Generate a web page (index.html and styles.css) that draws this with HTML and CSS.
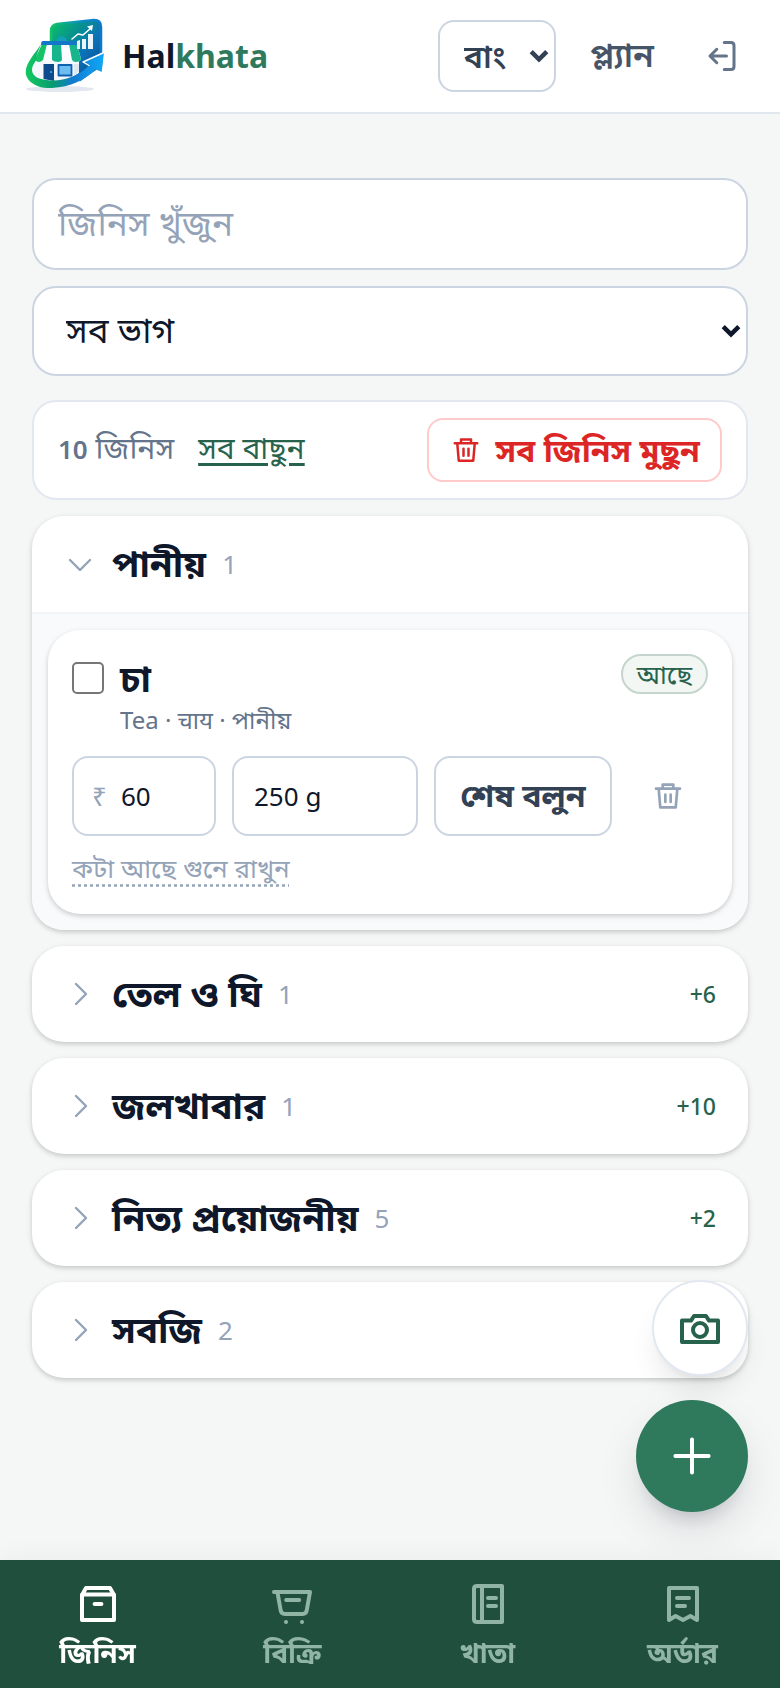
FILE: index.html
```html
<!DOCTYPE html>
<html lang="bn">
<head>
    <meta charset="UTF-8">
    <meta name="viewport" content="width=device-width, initial-scale=1.0">
    <title>Halkhata</title>
    <link rel="stylesheet" href="styles.css">
</head>
<body>
  <!-- icons used more than once -->
  <svg class="sprite" aria-hidden="true">
    <symbol id="trash" viewBox="0 0 24 24">
      <path d="M3 6.500h18M8 6V3.500h8V6M5 6.500l1.200 14h11.600L19 6.500M10 11v5.500M14 11v5.500"/>
    </symbol>
    <symbol id="arrow" viewBox="0 0 18 12">
      <path d="M2 2l7 7 7-7"/>
    </symbol>
    <symbol id="right" viewBox="0 0 16 16">
      <path d="M6 3l5 5-5 5"/>
    </symbol>
  </svg>

  <header class="topbar">
    <a class="brand" href="#">
      <svg class="logo" viewBox="24 16 82 80" aria-hidden="true">
        <defs>
          <linearGradient id="panel" x1="0" y1="0" x2="1" y2="1">
            <stop offset="0" stop-color="#0cc465"/>
            <stop offset=".35" stop-color="#07908f"/>
            <stop offset=".6" stop-color="#0b72b8"/>
            <stop offset="1" stop-color="#0b3f84"/>
          </linearGradient>
          <linearGradient id="edge" x1="0" y1="0" x2="1" y2="0">
            <stop offset="0" stop-color="#10c463"/>
            <stop offset=".6" stop-color="#0d8cc8"/>
            <stop offset="1" stop-color="#1078cc"/>
          </linearGradient>
          <linearGradient id="swoosh" x1="0" y1="0" x2="1" y2="0">
            <stop offset="0" stop-color="#12c95e"/>
            <stop offset=".35" stop-color="#089a72"/>
            <stop offset=".6" stop-color="#127bd0"/>
            <stop offset="1" stop-color="#0fa8f6"/>
          </linearGradient>
        </defs>
        <ellipse cx="60" cy="89" rx="34" ry="3" fill="#e3e7ef"/>
        <path d="M51 60V31q0-6 6-7l37-4q7 0 7 7v38L80 80 62 74z" fill="url(#panel)" stroke="url(#edge)" stroke-width="2.500"/>
        <path d="M36 57h43v16q-12 9-25 9-16-1-22-9 0-9 4-16z" fill="#f4f7fb"/>
        <path d="M56 41q2-5 6-5 4 1 5 5z" fill="#10a0b8"/>
        <path d="M42 44h35l4 15q-1 3-5 3-3 0-4-2-2 2-5 2-3 0-4-2-2 2-5 2-3 0-5-2-2 2-5 2-3 0-4-2-2 2-5 1-3 0-4-3z" fill="#fafcff"/>
        <path d="M52 44h9l1 16q-1 2-4 2-4 0-6-2zM69 44h8l4 15q-1 3-5 3-3 0-4-2z" fill="#17b58b"/>
        <path d="M42 44h5l-4 16q-2 2-4 2-3 0-4-3z" fill="#14c466"/>
        <path d="M43 41h33q2 0 2 4H41q0-4 2-4z" fill="#1476c8"/>
        <path d="M43.500 64H54v17l-10.500-2z" fill="#0c4a8c"/>
        <path d="M58.500 65h13v10.500h-13z" fill="#6ebdf0" stroke="#0d61ae" stroke-width="1.800"/>
        <path d="M74 64h5v8l-5 3z" fill="#dfe8f2"/>
        <circle cx="51" cy="72" r="1" fill="#41b7f5"/>
        <path d="M77 41l3-1v9h-3zM82 39h4v10h-4zM88 34h5v15h-5z" fill="#eaf4fc"/>
        <path d="M72 39l6-5 5 1 8-7" fill="none" stroke="#fff" stroke-width="1.600"/>
        <path d="M87 26.500l6-1.500-1 6z" fill="#fff"/>
        <path d="M41 44C35 54 26 62 25.700 72 26 82 38 89 52 88c18-1 34-8 43-19l6.700 3L104 52.500 83 62l6 3.500C80 75 66 80.500 53 80.500 41 80.500 32 77 32 70c0-5 4-9 5-11-2-2 2-9 4-15z" fill="url(#swoosh)"/>
        <path d="M89 65.500L83 62l21-9.500" fill="none" stroke="#fff" stroke-width="1.400"/>
      </svg>
      <span class="brand-name">Hal<span>khata</span></span>
    </a>
    <div class="top-actions">
      <div class="pick pick-lang">
        <select aria-label="ভাষা"><option>বাং</option></select>
        <svg class="pick-arrow"><use href="#arrow"/></svg>
      </div>
      <a class="plan" href="#">প্ল্যান</a>
      <button class="logout" type="button" aria-label="বেরোন">
        <svg viewBox="0 0 24 24"><path d="M13.500 3H18q2 0 2 2v14q0 2-2 2h-4.500M15 12H4M8.500 7.500L4 12l4.500 4.500"/></svg>
      </button>
    </div>
  </header>

  <main class="page">
    <div class="filters">
      <input class="search" type="text" placeholder="জিনিস খুঁজুন" aria-label="জিনিস খুঁজুন">
      <div class="pick pick-cat">
        <select aria-label="ভাগ"><option>সব ভাগ</option></select>
        <svg class="pick-arrow"><use href="#arrow"/></svg>
      </div>
    </div>

    <div class="bulk">
      <span class="total"><b>10</b> জিনিস</span>
      <a class="select-all" href="#">সব বাছুন</a>
      <button class="clear-all" type="button">
        <svg><use href="#trash"/></svg>
        সব জিনিস মুছুন
      </button>
    </div>

    <section class="group">
      <button class="group-head" type="button" aria-expanded="true">
        <svg viewBox="0 0 16 16"><path d="M3 6l5 5 5-5"/></svg>
        <span class="group-name">পানীয়</span>
        <span class="count">1</span>
      </button>
      <div class="group-body">
        <article class="item">
          <div class="item-top">
            <input type="checkbox" id="tea">
            <div class="item-text">
              <label for="tea">চা</label>
              <p>Tea · चाय · পানীয়</p>
            </div>
            <span class="badge">আছে</span>
          </div>
          <div class="item-row">
            <label class="price"><span>₹</span><input type="text" value="60" aria-label="দাম"></label>
            <input class="unit" type="text" value="250 g" aria-label="মাপ">
            <button class="sold-out" type="button">শেষ বলুন</button>
            <button class="remove" type="button" aria-label="মুছুন"><svg><use href="#trash"/></svg></button>
          </div>
          <a class="stock" href="#">কটা আছে গুনে রাখুন</a>
        </article>
      </div>
    </section>

    <section class="group">
      <button class="group-head" type="button">
        <svg><use href="#right"/></svg>
        <span class="group-name">তেল ও ঘি</span>
        <span class="count">1</span>
        <span class="more">+6</span>
      </button>
    </section>
    <section class="group">
      <button class="group-head" type="button">
        <svg><use href="#right"/></svg>
        <span class="group-name">জলখাবার</span>
        <span class="count">1</span>
        <span class="more">+10</span>
      </button>
    </section>
    <section class="group">
      <button class="group-head" type="button">
        <svg><use href="#right"/></svg>
        <span class="group-name">নিত্য প্রয়োজনীয়</span>
        <span class="count">5</span>
        <span class="more">+2</span>
      </button>
    </section>
    <section class="group">
      <button class="group-head" type="button">
        <svg><use href="#right"/></svg>
        <span class="group-name">সবজি</span>
        <span class="count">2</span>
      </button>
    </section>
  </main>

  <div class="fabs">
    <button class="fab-camera" type="button" aria-label="ছবি">
      <svg viewBox="0 0 24 24"><path d="M3 8.300h4.500L9 6h6l1.500 2.300H21V19H3z"/><circle cx="12" cy="13" r="3.500"/></svg>
    </button>
    <button class="fab-add" type="button" aria-label="নতুন জিনিস">
      <svg viewBox="0 0 24 24"><path d="M12 3.700v16.600M3.700 12h16.600"/></svg>
    </button>
  </div>

  <nav class="tabs">
    <a class="tab active" href="#">
      <svg viewBox="0 0 24 24"><path d="M4 7.500L6 4h12l2 3.500V20H4zM4 7.200h16M10.300 12h3.400"/></svg>
      জিনিস
    </a>
    <a class="tab" href="#">
      <svg viewBox="0 0 24 24"><path d="M2.500 6h18l-1.600 9q-.3 2-2.100 2H8q-1.900 0-2.200-2L4.200 6M8.600 10h6.500M8.500 21h.01M16.500 21h.01"/></svg>
      বিক্রি
    </a>
    <a class="tab" href="#">
      <svg viewBox="0 0 24 24"><path d="M6.500 3H19v18H6.500Q5 21 5 19.500v-15Q5 3 6.500 3zM9 3v18M12 9h4M12 13h4"/></svg>
      খাতা
    </a>
    <a class="tab" href="#">
      <svg viewBox="0 0 24 24"><path d="M5 4h14v16l-3.300-2-3.700 2-3.700-2L5 20zM9 9h6M9 13h4"/></svg>
      অর্ডার
    </a>
  </nav>
</body>
</html>
```
FILE: styles.css
```css
* {
  box-sizing: border-box;
}
body {
  margin: 0;
  min-height: 100vh;
  background: #f5f7f6;
  color: #0f172a;
  font-family: "Noto Sans", "Noto Sans Bengali", sans-serif;
  font-size: 26px;
  line-height: 40px;
}
button, input, select {
  font: inherit;
  color: inherit;
  margin: 0;
}
button {
  background: none;
  border: 0;
  padding: 0;
  cursor: pointer;
}
a {
  color: inherit;
  text-decoration: none;
}
svg {
  display: block;
  flex: none;
  fill: none;
  stroke: currentColor;
  stroke-width: 2;
  stroke-linecap: round;
  stroke-linejoin: round;
}
.sprite {
  position: absolute;
  width: 0;
  height: 0;
}

/* header */
.topbar {
  display: flex;
  align-items: center;
  justify-content: space-between;
  height: 114px;
  padding: 0 24px;
  background: #fff;
  border-bottom: 2px solid #e2e8f0;
}
.brand {
  display: flex;
  align-items: center;
  gap: 16px;
}
.logo {
  width: 82px;
  height: 80px;
  stroke: none;
}
.brand-name {
  font-size: 32px;
  font-weight: 700;
}
.brand-name span {
  color: #2f7a5d;
}
.top-actions {
  display: flex;
  align-items: center;
}
.pick {
  position: relative;
}
.pick select {
  appearance: none;
  display: block;
  width: 100%;
  background: #fff;
  border: 2px solid #cbd5e1;
}
.pick-arrow {
  position: absolute;
  right: 7px;
  top: 50%;
  width: 20px;
  height: 14px;
  margin-top: -7px;
  pointer-events: none;
  stroke-width: 4;
  stroke-linecap: butt;
  stroke-linejoin: miter;
}
.pick-lang {
  width: 118px;
  color: #334155;
}
.pick-lang select {
  height: 72px;
  padding: 0 24px;
  border-radius: 16px;
  font-size: 32px;
  font-weight: 600;
}
.plan {
  padding: 0 34px 4px;
  color: #475569;
  font-size: 34px;
  font-weight: 600;
}
.logout {
  display: grid;
  place-items: center;
  width: 68px;
  height: 72px;
  color: #64748b;
}
.logout svg {
  width: 36px;
  height: 36px;
}

/* list */
.page {
  display: flex;
  flex-direction: column;
  gap: 16px;
  padding: 64px 32px 310px;
}
.filters {
  display: flex;
  flex-direction: column;
  gap: 16px;
  margin-bottom: 8px;
}
.search {
  width: 100%;
  height: 92px;
  padding: 0 24px 4px;
  background: #fff;
  border: 2px solid #cbd5e1;
  border-radius: 24px;
  font-size: 35px;
}
.search::placeholder {
  color: #94a3b8;
}
.pick-cat select {
  height: 90px;
  padding: 0 32px 2px;
  border-radius: 24px;
  font-size: 35px;
}
.bulk {
  display: flex;
  align-items: center;
  height: 100px;
  padding: 0 24px;
  background: #fff;
  border: 2px solid #e2e8f0;
  border-radius: 24px;
}
.total {
  padding-bottom: 4px;
  color: #64748b;
  font-size: 30px;
}
.total b {
  font-size: 26px;
  font-weight: 600;
}
.select-all {
  margin-left: 24px;
  padding-bottom: 4px;
  color: #27634c;
  font-size: 30px;
  text-decoration: underline;
  text-underline-offset: 4px;
}
.clear-all {
  display: flex;
  align-items: center;
  gap: 14px;
  height: 64px;
  margin-left: auto;
  padding: 0 20px 0 22px;
  border: 2px solid #fecaca;
  border-radius: 16px;
  color: #dc2626;
  font-size: 32px;
  font-weight: 700;
}
.clear-all svg {
  width: 30px;
  height: 30px;
}
.group {
  overflow: hidden;
  background: #fff;
  border-radius: 32px;
  box-shadow: 0 2px 6px rgba(0, 0, 0, .1), 0 2px 4px rgba(0, 0, 0, .1);
}
.group-head {
  display: flex;
  align-items: center;
  width: 100%;
  height: 96px;
  padding: 0 32px;
  text-align: left;
}
.group-head svg {
  width: 32px;
  height: 32px;
  margin-right: 16px;
  color: #94a3b8;
  stroke-width: 1.2;
}
.group-name {
  padding-bottom: 2px;
  font-size: 37px;
  font-weight: 700;
}
.count {
  margin-left: 16px;
  color: #94a3b8;
}
.more {
  margin-left: auto;
  color: #27634c;
  font-size: 23px;
  font-weight: 500;
}
.group-body {
  padding: 16px;
  background: #f8fafc;
  border-top: 2px solid #f1f5f9;
}
.item {
  padding: 24px;
  background: #fff;
  border-radius: 32px;
  box-shadow: 0 2px 6px rgba(0, 0, 0, .1), 0 2px 4px rgba(0, 0, 0, .1);
}
.item-top {
  display: flex;
  align-items: flex-start;
}
.item-top input {
  appearance: none;
  width: 32px;
  height: 32px;
  margin: 8px 16px 0 0;
  background: #fff;
  border: 2px solid #767676;
  border-radius: 5px;
}
.item-top input:checked {
  background: #2f7a5d;
}
.item-text {
  flex: 1;
}
.item-text label {
  display: block;
  height: 46px;
  line-height: 48px;
  font-size: 37px;
  font-weight: 700;
}
.item-text p {
  margin: 0;
  height: 40px;
  color: #64748b;
  font-size: 24px;
}
.badge {
  height: 40px;
  padding: 0 14px;
  border: 2px solid #c5d5ce;
  border-radius: 20px;
  background: #f2f7f4;
  color: #27634c;
  line-height: 36px;
}
.item-row {
  display: grid;
  grid-template-columns: 144px 1fr 178px 80px;
  gap: 16px;
  margin-top: 16px;
}
.price, .unit, .sold-out {
  width: 100%;
  height: 80px;
  background: #fff;
  border: 2px solid #cbd5e1;
  border-radius: 16px;
}
.price {
  display: flex;
  align-items: center;
  gap: 14px;
  padding: 0 18px;
}
.price span {
  color: #94a3b8;
}
.price input {
  width: 100%;
  min-width: 0;
  padding: 0;
  border: 0;
}
.unit {
  padding: 0 20px;
}
.sold-out {
  padding-bottom: 2px;
  color: #334155;
  font-size: 32px;
  font-weight: 700;
}
.remove {
  display: grid;
  place-items: center;
  color: #94a3b8;
}
.remove svg {
  width: 32px;
  height: 32px;
}
.stock {
  display: inline-block;
  margin-top: 12px;
  margin-bottom: 2px;
  color: #94a3b8;
  text-decoration: underline dotted;
  text-underline-offset: 6px;
}

/* floating buttons */
.fabs {
  position: fixed;
  right: 32px;
  bottom: 176px;
  display: flex;
  flex-direction: column;
  align-items: flex-end;
  gap: 24px;
}
.fabs button {
  display: grid;
  place-items: center;
  border-radius: 50%;
}
.fabs svg {
  width: 48px;
  height: 48px;
}
.fab-camera {
  width: 96px;
  height: 96px;
  background: #fff;
  border: 2px solid #e2e8f0;
  color: #27634c;
  box-shadow: 0 20px 30px -6px rgba(15, 23, 42, .1), 0 8px 12px -8px rgba(15, 23, 42, .1);
}
.fab-add {
  width: 112px;
  height: 112px;
  background: #2f7a5d;
  color: #fff;
  box-shadow: 0 20px 50px -10px rgba(15, 23, 42, .18), 0 16px 20px -12px rgba(15, 23, 42, .18);
}

/* bottom tabs */
.tabs {
  position: fixed;
  left: 0;
  right: 0;
  bottom: 0;
  display: flex;
  height: 128px;
  background: #214f3e;
  box-shadow: 0 -4px 24px rgba(0, 0, 0, .04);
}
.tab {
  flex: 1;
  display: flex;
  flex-direction: column;
  align-items: center;
  padding-top: 20px;
  color: #90b5a5;
  font-size: 28px;
  font-weight: 700;
}
.tab svg {
  width: 48px;
  height: 48px;
  margin-bottom: 4px;
}
.active {
  color: #fff;
}
```
